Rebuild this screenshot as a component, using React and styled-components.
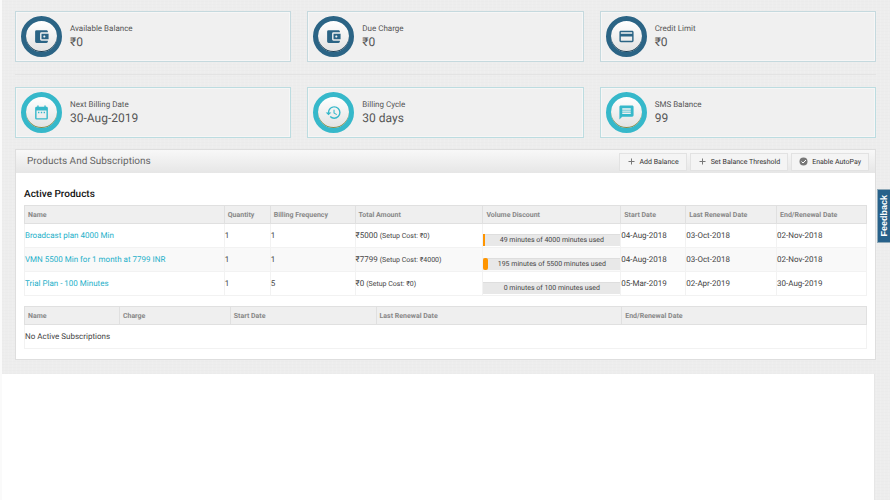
import React from 'react';
import styled, { createGlobalStyle } from 'styled-components';
import {
	MdAccountBalanceWallet,
	MdCreditCard,
	MdDateRange,
	MdHistory,
	MdMessage,
} from 'react-icons/md';


const GlobalStyle = createGlobalStyle`
	* {
		box-sizing: border-box;
	}

	body {
		margin: 0;
		background-color: #ededed;
		background-image:
			repeating-linear-gradient(0deg, rgba(0, 0, 0, 0.006) 0 1px, transparent 1px 3px),
			repeating-linear-gradient(90deg, rgba(255, 255, 255, 0.1) 0 1px, transparent 1px 4px);
		font-family: Roboto, sans-serif;
		font-size: 8px;
		color: #444;
		text-rendering: geometricPrecision;
	}
`;

const Page = styled.div`
	display: flex;
	flex-direction: column;
	min-height: 100vh;
	border-left: 2px solid #fafafa;
`;

const Content = styled.main`
	padding: 11px 14px 14px 13px;
`;

const CardRow = styled.section`
	display: grid;
	grid-template-columns: repeat(3, 1fr);
	gap: 16px;
`;

const Divider = styled.hr`
	height: 1px;
	margin: 12px 0;
	border: 0;
	background: #e3e3e3;
`;

const Card = styled.div`
	display: flex;
	align-items: center;
	gap: 8px;
	height: 51px;
	padding: 0 5px;
	border: 1px solid ${props => props.$edge};
	background: #f0f0f0;
	box-shadow: inset 0 0 0 1px #f6f6f6;
`;

const Ring = styled.div`
	display: flex;
	align-items: center;
	justify-content: center;
	width: 41px;
	height: 41px;
	border: 5px solid ${props => props.$color};
	border-radius: 50%;
	background: linear-gradient(#fff, #e2e2e2);
	box-shadow: inset 0 -1px 0 ${props => props.$shade};
	color: ${props => props.$color};

	svg {
		width: 17px;
		height: 17px;
	}
`;

const CardText = styled.div`
	padding-bottom: 2px;
`;

const CardLabel = styled.div`
	font-size: 8px;
	line-height: 13px;
	color: #555;
`;

const CardValue = styled.div`
	font-size: 12px;
	line-height: 15px;
	color: #555;
`;

const Panel = styled.section`
	margin-top: 11px;
	border: 1px solid #dedede;
	background: #fff;
`;

const PanelHeader = styled.header`
	display: flex;
	align-items: center;
	justify-content: space-between;
	height: 23px;
	padding: 0 6px 0 11px;
	background: linear-gradient(#f8f8f8, #e6e6e6);
`;

const PanelTitle = styled.h2`
	margin: 0;
	font-size: 10px;
	font-weight: 400;
	color: #666;
`;

const Actions = styled.div`
	display: flex;
	gap: 3px;
`;

const ActionButton = styled.button`
	display: flex;
	align-items: center;
	gap: 4px;
	height: 18px;
	padding: 0 7px;
	border: 1px solid #e2e2e2;
	background: #f4f4f4;
	font-family: inherit;
	font-size: 7px;
	color: #333;
	text-rendering: inherit;

	svg {
		width: 9px;
		height: 9px;
	}
`;

const PanelBody = styled.div`
	padding: 16px 8px 10px;
`;

const TableTitle = styled.h3`
	margin: 0 0 4px;
	font-size: 10px;
	line-height: 12px;
	font-weight: 500;
	color: #111;
`;

const Table = styled.table`
	width: 100%;
	table-layout: fixed;
	border-collapse: collapse;

	& + & {
		margin-top: 10px;
	}

	th {
		height: 18px;
		padding: 0 3px;
		border: 1px solid #e0e0e0;
		background: #efefef;
		font-size: 7px;
		font-weight: 700;
		text-align: left;
		color: #888;
	}

	td {
		height: 24px;
		padding: 0;
		border: 1px solid #f2f2f2;
		white-space: nowrap;
	}

	tbody tr:nth-child(even) {
		background: #f9f9f9;
	}
`;

const PlanLink = styled.a`
	color: #1eb0c9;
	text-decoration: none;
`;

const SetupCost = styled.span`
	font-size: 7px;
`;

const Usage = styled.div`
	display: grid;
	height: 12px;
	margin: 10px 0 1px;
	background: #e8e8e8;
	box-shadow: inset 0 1px 0 #dedede;
	font-size: 7px;
	line-height: 12px;
	text-align: center;

	> * {
		grid-area: 1 / 1;
	}
`;

const UsageFill = styled.div`
	border-radius: ${props => (props.$round ? '2px' : '0')};
	background: #ff9500;
`;

const Blank = styled.div`
	flex: 1;
	margin-right: 15px;
	border-right: 1px solid #e6e6e6;
	background: #fff;
`;

const FeedbackTab = styled.button`
	position: fixed;
	top: 189px;
	right: 0;
	width: 13px;
	height: 54px;
	padding: 0;
	border: 1px solid #8fa9b8;
	border-right: 0;
	background: #27618a;
	color: #fff;
	font: bold 9px/12px 'Liberation Sans', sans-serif;

	span {
		display: block;
		writing-mode: vertical-rl;
		transform: rotate(180deg);
	}
`;


const dark = { color: '#2b6485', shade: '#1d3f54', edge: '#c5d9de' };
const light = { color: '#36b8ca', shade: '#8a8a45', edge: '#bcdce0' };

const balances = [
	{ label: 'Available Balance', value: '₹0', icon: MdAccountBalanceWallet },
	{ label: 'Due Charge', value: '₹0', icon: MdAccountBalanceWallet },
	{ label: 'Credit Limit', value: '₹0', icon: MdCreditCard },
];

const billing = [
	{ label: 'Next Billing Date', value: '30-Aug-2019', icon: MdDateRange },
	{ label: 'Billing Cycle', value: '30 days', icon: MdHistory },
	{ label: 'SMS Balance', value: '99', icon: MdMessage },
];

const productColumns = [
	['Name', 200],
	['Quantity', 46],
	['Billing Frequency', 85],
	['Total Amount', 128],
	['Volume Discount', 138],
	['Start Date', 65],
	['Last Renewal Date', 91],
	['End/Renewal Date', 90],
];

const subscriptionColumns = [
	['Name', 95],
	['Charge', 111],
	['Start Date', 146],
	['Last Renewal Date', 246],
	['End/Renewal Date', 245],
];

const products = [
	{ name: 'Broadcast plan 4000 Min', quantity: 1, frequency: 1, amount: 5000, setup: 0, used: 49, total: 4000, start: '04-Aug-2018', last: '03-Oct-2018', end: '02-Nov-2018' },
	{ name: 'VMN 5500 Min for 1 month at 7799 INR', quantity: 1, frequency: 1, amount: 7799, setup: 4000, used: 195, total: 5500, start: '04-Aug-2018', last: '03-Oct-2018', end: '02-Nov-2018' },
	{ name: 'Trial Plan - 100 Minutes', quantity: 1, frequency: 5, amount: 0, setup: 0, used: 0, total: 100, start: '05-Mar-2019', last: '02-Apr-2019', end: '30-Aug-2019' },
];


function Cards({ items, theme }) {
	return (
		<CardRow>
			{items.map(({ label, value, icon: Icon }) => (
				<Card key={label} $edge={theme.edge}>
					<Ring $color={theme.color} $shade={theme.shade}><Icon /></Ring>
					<CardText>
						<CardLabel>{label}</CardLabel>
						<CardValue>{value}</CardValue>
					</CardText>
				</Card>
			))}
		</CardRow>
	);
}

function TableHead({ columns }) {
	const total = columns.reduce((sum, column) => sum + column[1], 0);

	return (
		<>
			<colgroup>
				{columns.map(([name, size]) => (
					<col key={name} style={{ width: `${(size / total) * 100}%` }} />
				))}
			</colgroup>
			<thead>
				<tr>
					{columns.map(([name]) => <th key={name} scope='col'>{name}</th>)}
				</tr>
			</thead>
		</>
	);
}

function PlusIcon() {
	return (
		<svg viewBox='0 0 18 18' aria-hidden='true'>
			<path d='M9 3v12M3 9h12' fill='none' stroke='#777' strokeWidth='2' />
		</svg>
	);
}

function CheckIcon() {
	return (
		<svg viewBox='0 0 18 18' aria-hidden='true'>
			<circle cx='9' cy='9' r='8' fill='#777' />
			<path d='M5 9l3 3 6-6' fill='none' stroke='#fff' strokeWidth='2' />
		</svg>
	);
}

function App() {
	return (
		<Page>
			<GlobalStyle />
			<Content>
				<Cards items={balances} theme={dark} />
				<Divider />
				<Cards items={billing} theme={light} />

				<Panel>
					<PanelHeader>
						<PanelTitle>Products And Subscriptions</PanelTitle>
						<Actions>
							<ActionButton type='button'><PlusIcon />Add Balance</ActionButton>
							<ActionButton type='button'><PlusIcon />Set Balance Threshold</ActionButton>
							<ActionButton type='button'><CheckIcon />Enable AutoPay</ActionButton>
						</Actions>
					</PanelHeader>
					<PanelBody>
						<TableTitle>Active Products</TableTitle>
						<Table>
							<TableHead columns={productColumns} />
							<tbody>
								{products.map(product => (
									<tr key={product.name}>
										<td><PlanLink href='#'>{product.name}</PlanLink></td>
										<td>{product.quantity}</td>
										<td>{product.frequency}</td>
										<td>₹{product.amount} <SetupCost>(Setup Cost: ₹{product.setup})</SetupCost></td>
										<td>
											<Usage>
												<UsageFill
													$round={product.used > 100}
													style={{ width: `${(product.used / product.total) * 100}%` }}
												/>
												<span>{product.used} minutes of {product.total} minutes used</span>
											</Usage>
										</td>
										<td>{product.start}</td>
										<td>{product.last}</td>
										<td>{product.end}</td>
									</tr>
								))}
							</tbody>
						</Table>
						<Table>
							<TableHead columns={subscriptionColumns} />
							<tbody>
								<tr>
									<td colSpan={5}>No Active Subscriptions</td>
								</tr>
							</tbody>
						</Table>
					</PanelBody>
				</Panel>
			</Content>
			<Blank />
			<FeedbackTab type='button'><span>Feedback</span></FeedbackTab>
		</Page>
	);
}

export default App;
